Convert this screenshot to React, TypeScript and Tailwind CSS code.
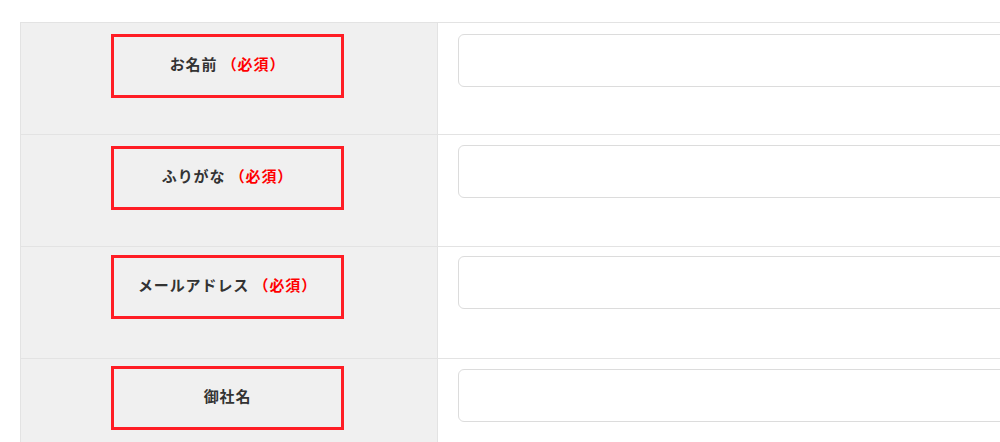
import React from "react";

const rows: { label: string; required: boolean; boxMt: string; inputMt: string }[] = [
  { label: "お名前", required: true, boxMt: "mt-[11px]", inputMt: "mt-[11px]" },
  { label: "ふりがな", required: true, boxMt: "mt-[11px]", inputMt: "mt-[10px]" },
  { label: "メールアドレス", required: true, boxMt: "mt-[8px]", inputMt: "mt-[9px]" },
  { label: "御社名", required: false, boxMt: "mt-[7px]", inputMt: "mt-[10px]" },
];

export default function App() {
  return (
    <div
      className="w-screen h-[442px] overflow-hidden bg-white pt-[22px] pl-[20px]"
      style={{ fontFamily: '"Noto Sans CJK JP", "Noto Sans", sans-serif' }}
    >
      <div className="w-[1100px] border-l border-t border-[#e3e3e3]">
        {rows.map((r) => (
          <div key={r.label} className="flex h-[112px] border-b border-[#e3e3e3]">
            <div className="w-[417px] shrink-0 bg-[#f0f0f0] border-r border-[#e3e3e3] flex flex-col items-center">
              <div
                className={`${r.boxMt} w-[233px] h-[64px] border-[3px] border-[#ff1d25] flex items-center justify-center pb-[4px] ml-[-3px]`}
              >
                <span className="text-[15px] leading-[20px] font-bold text-[#333333] tracking-[0.9px]">
                  {r.label}
                  {r.required && <span className="text-[#ff0000]"> （必須）</span>}
                </span>
              </div>
            </div>
            <div className="flex-1 pl-[20px]">
              <div
                className={`${r.inputMt} h-[53px] w-full bg-white border border-[#dcdcdc] rounded-[6px]`}
              />
            </div>
          </div>
        ))}
      </div>
    </div>
  );
}
